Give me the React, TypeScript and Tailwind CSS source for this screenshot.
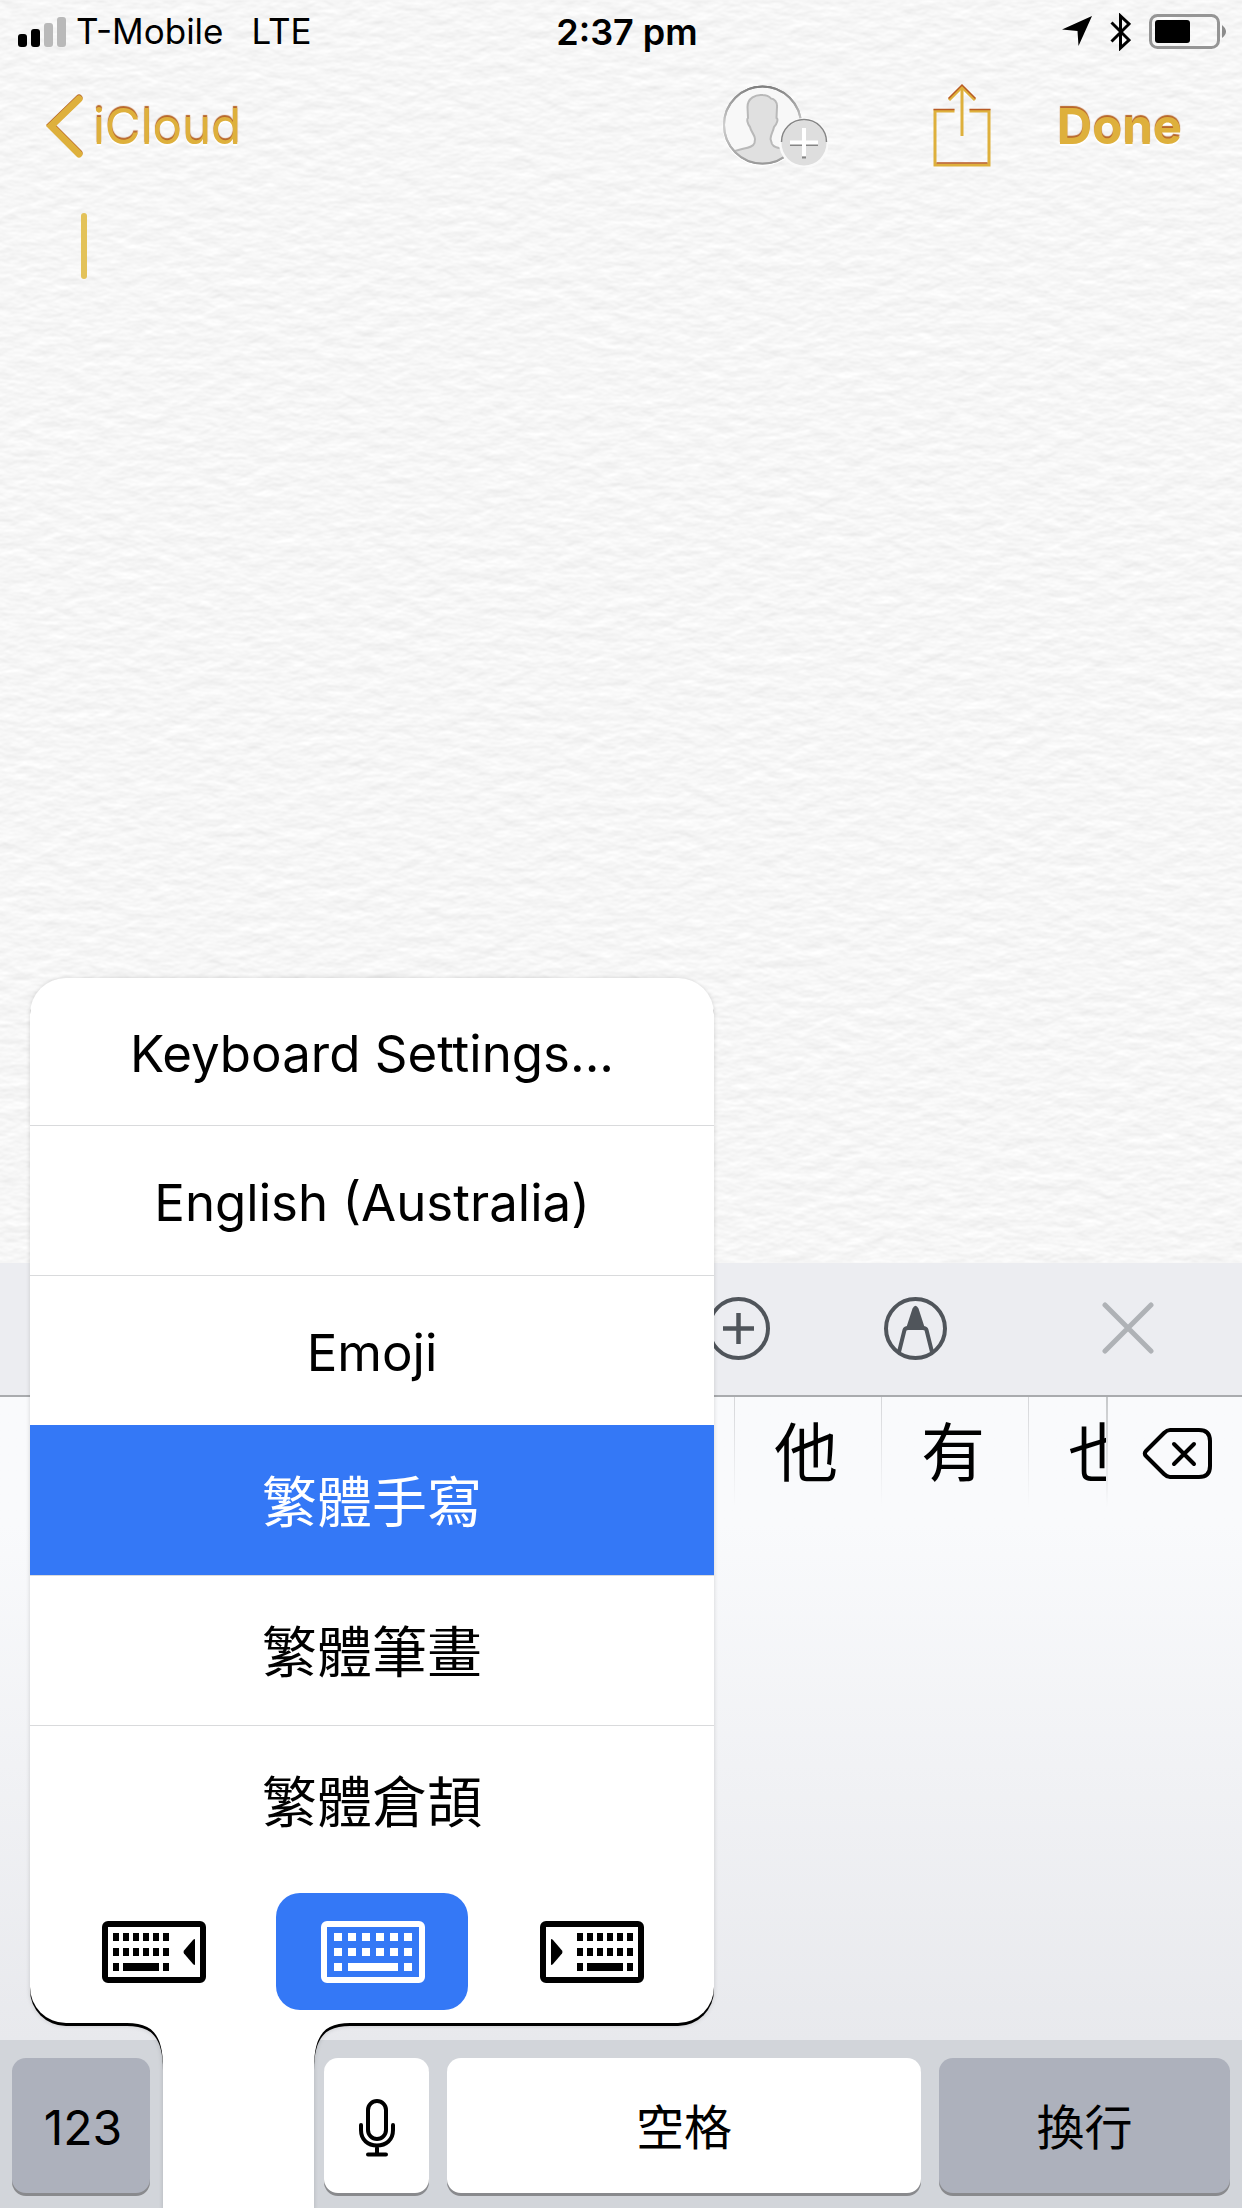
import type { ReactNode } from "react";

const SANS = "font-['Inter','Noto_Sans_CJK_TC',sans-serif]";
const ENGRAVED = "text-[#deb03c] [text-shadow:0_-2px_1px_#b8662a,0_2px_1px_#ffffff]";

function PaperTexture() {
  return (
    <svg className="pointer-events-none absolute inset-0 h-full w-full" aria-hidden="true">
      <filter id="paper" x="0" y="0" width="100%" height="100%" colorInterpolationFilters="sRGB">
        <feTurbulence type="fractalNoise" baseFrequency="0.045 0.085" numOctaves={3} seed={7} result="noise" />
        <feDiffuseLighting in="noise" surfaceScale={0.28} diffuseConstant={1.115} lightingColor="#ffffff">
          <feDistantLight azimuth={270} elevation={60} />
        </feDiffuseLighting>
      </filter>
      <rect width="100%" height="100%" filter="url(#paper)" />
    </svg>
  );
}

function StatusBar() {
  return (
    <div className="relative grid h-[60px] grid-cols-[1fr_auto_1fr] items-center px-[15px] pt-[3px] text-[35px] leading-none text-black">
      <div className="flex items-center gap-[10px] pl-[3px]">
        <svg width="48" height="30" viewBox="0 0 48 30" aria-label="Signal strength">
          <rect x="0" y="17" width="9" height="13" rx="3" />
          <rect x="13" y="12" width="9" height="18" rx="3" />
          <rect x="26" y="6" width="9" height="24" rx="3" fill="#b9b9b9" />
          <rect x="39" y="0" width="9" height="30" rx="3" fill="#b9b9b9" />
        </svg>
        <span>T-Mobile</span>
        <span className="pl-[18px]">LTE</span>
      </div>
      <div className="pl-3 text-[36px] font-semibold">2:37 pm</div>
      <div className="flex items-center justify-end gap-[18px]">
        <svg width="30" height="31" viewBox="0 0 30 31" aria-label="Location in use">
          <path d="M30 0 L16.500 30 L15.500 15 L0 13.500 Z" />
        </svg>
        <svg width="21" height="38" viewBox="0 0 21 38" fill="none" stroke="#000" strokeWidth="3" aria-label="Bluetooth">
          <path d="M1.500 9.500 L19 27 L10.500 35 V3 L19 11 L1.500 28.500" />
        </svg>
        <svg width="78" height="35" viewBox="0 0 78 35" aria-label="Battery">
          <rect x="1.500" y="1.500" width="68" height="32" rx="7" fill="none" stroke="#959595" strokeWidth="3" />
          <rect x="6" y="6" width="35" height="23" rx="3" />
          <path d="M73 11 Q81 17.500 73 24 Z" fill="#8b8b8b" />
        </svg>
      </div>
    </div>
  );
}

function NavBar() {
  return (
    <header className="relative flex h-[132px] items-center justify-between pr-[60px] pl-[46px]">
      <a href="#icloud" className={`flex items-center gap-[9px] text-[49px] leading-none ${ENGRAVED}`}>
        <svg width="38" height="64" viewBox="0 0 38 64" fill="none" strokeLinecap="round" strokeLinejoin="miter" aria-hidden="true">
          <path d="M33 4 L5 31 L33 59" stroke="#b8662a" strokeWidth="7" />
          <path d="M33 5 L5 32 L33 60" stroke="#deb03c" strokeWidth="7" />
        </svg>
        iCloud
      </a>
      <div className="flex items-center">
        <button type="button" aria-label="Add people" className="mr-[105px] pb-[3px]">
          <svg width="106" height="84" viewBox="0 0 106 84">
            <defs>
              <clipPath id="face">
                <circle cx="40.500" cy="42" r="38.500" />
              </clipPath>
              <linearGradient id="rim" x1="0" y1="0" x2="0" y2="1">
                <stop offset="0" stopColor="#808080" />
                <stop offset="0.500" stopColor="#cfcfcf" />
                <stop offset="1" stopColor="#9a9a9a" />
              </linearGradient>
            </defs>
            <circle cx="40.500" cy="43" r="38.500" fill="none" stroke="#fff" strokeWidth="3" />
            <circle cx="40.500" cy="42" r="38.500" fill="#f8f8f8" stroke="url(#rim)" strokeWidth="2" />
            <g clipPath="url(#face)">
              <path
                d="M40 12 C34 11.500 25.500 15 25.500 24 L26 35 C24.500 36 25.500 41 28 44 C29 49 33 52 33 56 L32.500 60 C31 65 22 65 13 68 L10 70 V86 H74 V68 C62 65 52 66 50 61 L48.500 56 C48.500 52 51 49 52 44 C55 41 56.500 36 54.500 35 L55 24 C55.500 19 52 15.500 49 15.500 C47 13 43 12 40 12 Z"
                fill="#e0e0e0"
                stroke="#b9b9b9"
                strokeWidth="2"
              />
            </g>
            <circle cx="40.500" cy="42" r="38.500" fill="none" stroke="url(#rim)" strokeWidth="2" />
            <circle cx="82" cy="60" r="25" fill="#fafafa" />
            <circle cx="82" cy="60" r="22.500" fill="#dedede" />
            <path d="M59.500 59 A22.500 22.500 0 0 1 104.500 59" fill="none" stroke="#858585" strokeWidth="1.500" />
            <path d="M68 62 H96 M80 74.500 H84" stroke="#858585" strokeWidth="2" />
            <path d="M68 59.500 H96 M82 45 V73" stroke="#fff" strokeWidth="4" />
          </svg>
        </button>
        <button type="button" aria-label="Share" className="mr-[66px] pb-[3px]">
          <svg width="58" height="84" viewBox="0 0 58 84" fill="none" stroke="#deb03c" strokeWidth="3">
            <path d="M21.500 28 H2 V82 H56 V28 H36.500" />
            <path d="M29 4 V53" />
            <path d="M16 17 L29 4 L42 17" />
            <path d="M0.500 26.500 H21.500 M36.500 26.500 H57.500 M3.500 80 H54.500" stroke="#b85a24" strokeWidth="1.500" />
            <path d="M15.500 15.500 L29 2 L42.500 15.500" stroke="#b85a24" strokeWidth="1.500" />
          </svg>
        </button>
        <button type="button" className={`text-[49px] font-bold leading-none ${ENGRAVED}`}>
          Done
        </button>
      </div>
    </header>
  );
}

function Toolbar() {
  return (
    <div className="flex h-[132px] items-center justify-end bg-[#ecedf1] pr-[88px] pb-[2px]" role="toolbar" aria-label="Note tools">
      <button type="button" aria-label="Add attachment" className="mr-[114px]">
        <svg width="63" height="63" viewBox="0 0 63 63" fill="none" stroke="#50555b" strokeWidth="4">
          <circle cx="31.500" cy="31.500" r="29.500" />
          <path d="M16 31.500 H47 M31.500 16 V47" strokeWidth="4.500" />
        </svg>
      </button>
      <button type="button" aria-label="Markup" className="mr-[155px]">
        <svg width="63" height="63" viewBox="0 0 63 63" fill="none" stroke="#50555b" strokeWidth="4">
          <circle cx="31.500" cy="31.500" r="29.500" />
          <path d="M15 55 L20.500 33 Q21 31 24 31 H39 Q42 31 42.500 33 L48 55" />
          <path d="M28.500 11.500 Q31.500 6 34.500 11.500 L40.500 30 L43 33 H20 L22.500 30 Z" fill="#50555b" stroke="none" />
        </svg>
      </button>
      <button type="button" aria-label="Close toolbar">
        <svg width="52" height="52" viewBox="0 0 52 52" stroke="#afb2b6" strokeWidth="5" strokeLinecap="round">
          <path d="M3 3 L49 49 M49 3 L3 49" />
        </svg>
      </button>
    </div>
  );
}

function Candidates() {
  return (
    <div className="flex h-[112px] border-t-2 border-[#a9abae]">
      <div className="flex min-w-0 flex-1 overflow-hidden pl-[734px]">
        {["他", "有", "也"].map((c) => (
          <div key={c} className="flex w-[147px] shrink-0">
            <span className="w-px bg-linear-to-b from-[#d5d6d9] to-transparent" />
            <button type="button" className="flex-1 pt-[2px] pr-1 text-[64px] leading-[108px] text-black">
              {c}
            </button>
          </div>
        ))}
      </div>
      <span className="w-[2px] bg-linear-to-b from-[#c6c8ca] to-transparent" />
      <button type="button" aria-label="Delete" className="flex w-[134px] items-center justify-center pt-[3px] pl-[3px]">
        <svg width="70" height="51" viewBox="0 0 70 51" fill="none" stroke="#000" strokeWidth="4" strokeLinecap="round" strokeLinejoin="round">
          <path d="M28 2 H57 Q68 2 68 13 V38 Q68 49 57 49 H28 Q25 49 22 46 L4 28 Q1.500 25.500 4 23 L22 5 Q25 2 28 2 Z" />
          <path d="M32 16 L52 36 M52 16 L32 36" />
        </svg>
      </button>
    </div>
  );
}

function Key({ label, className, children }: { label?: string; className: string; children: ReactNode }) {
  return (
    <button
      type="button"
      aria-label={label}
      className={`flex h-[135px] items-center justify-center rounded-[14px] pt-1 text-[48px] leading-none text-black shadow-[0_3px_0_#898a8d] ${className}`}
    >
      {children}
    </button>
  );
}

function BottomKeys() {
  return (
    <div className="flex h-[168px] gap-[18px] bg-[#d2d5da] px-3 pt-[18px]">
      <Key className="w-[138px] bg-[#adb1bc] pl-1">123</Key>
      <div className="w-[138px]" />
      <Key label="Dictation" className="w-[105px] bg-white">
        <svg width="36" height="58" viewBox="0 0 36 58" fill="none" stroke="#000" strokeWidth="4" strokeLinecap="round">
          <rect x="9" y="2" width="18" height="38" rx="9" />
          <path d="M2 26 V31 C2 41 9 46.500 18 46.500 C27 46.500 34 41 34 31 V26 M18 47 V55 M9 55.500 H27" />
        </svg>
      </Key>
      <Key className="flex-1 bg-white">空格</Key>
      <Key className="w-[291px] bg-[#adb1bc]">換行</Key>
    </div>
  );
}

type Dock = "left" | "full" | "right";

function KeyboardGlyph({ dock }: { dock: Dock }) {
  const full = dock === "full";
  const pitch = full ? 14 : 10;
  const key = full ? 8 : 6;
  const start = dock === "left" ? 11 : full ? 13 : 37;
  const columns = [0, 1, 2, 3, 4, 5];
  return (
    <svg width="104" height="62" viewBox="0 0 104 62" fill="currentColor" aria-hidden="true">
      <rect x="3" y="3" width="98" height="56" rx="3" fill="none" stroke="currentColor" strokeWidth="6" />
      {[12, 27].map((y) => columns.map((i) => <rect key={`${y}-${i}`} x={start + i * pitch} y={y} width={key} height="8" />))}
      <rect x={start} y="42" width={key} height="8" />
      <rect x={start + pitch} y="42" width={pitch * 3 + key} height="8" />
      <rect x={start + pitch * 5} y="42" width={key} height="8" />
      {dock === "left" && <path d="M93 19 V43 Q93 45 91 43 L82 32.500 Q81 31 82 29.500 L91 19 Q93 17 93 19 Z" />}
      {dock === "right" && <path d="M11 19 V43 Q11 45 13 43 L22 32.500 Q23 31 22 29.500 L13 19 Q11 17 11 19 Z" />}
    </svg>
  );
}

const KEYBOARDS = [
  { name: "Keyboard Settings...", style: "h-[147px] pt-1 text-[51px]" },
  { name: "English (Australia)", style: "h-[150px] border-t border-[#d9dadc] pt-1 text-[51px]" },
  { name: "Emoji", style: "h-[150px] border-t border-[#d9dadc] pt-1 text-[51px]" },
  { name: "繁體手寫", style: "h-[150px] bg-[#3478f6] pt-1 text-[55px] text-white" },
  { name: "繁體筆畫", style: "h-[150px] border-t border-[#d9dadc] pt-1 text-[55px]" },
  { name: "繁體倉頡", style: "h-[150px] border-t border-[#d9dadc] pt-1 text-[55px]" },
];

const DOCKS: { dock: Dock; label: string; style: string }[] = [
  { dock: "left", label: "Dock keyboard left", style: "text-black" },
  { dock: "full", label: "Full width keyboard", style: "bg-[#3478f6] text-white" },
  { dock: "right", label: "Dock keyboard right", style: "text-black" },
];

function KeyboardMenu() {
  return (
    <div className="absolute bottom-0 left-[30px] w-[684px] filter-[drop-shadow(0_3px_0_#000)_drop-shadow(0_0_2px_rgba(0,0,0,0.15))]">
      <div className="overflow-hidden rounded-[36px] bg-white">
        {KEYBOARDS.map((k) => (
          <button key={k.name} type="button" className={`flex w-full items-center justify-center leading-none ${k.style}`}>
            {k.name}
          </button>
        ))}
        <div className="flex h-[148px] justify-center gap-[27px] pt-[18px]">
          {DOCKS.map((d) => (
            <button
              key={d.dock}
              type="button"
              aria-label={d.label}
              className={`flex h-[117px] w-[192px] items-center justify-center rounded-[24px] pl-px ${d.style}`}
            >
              <KeyboardGlyph dock={d.dock} />
            </button>
          ))}
        </div>
      </div>
      <svg className="-mt-px ml-[97px] block" width="223" height="186" viewBox="0 0 223 186" fill="#fff" aria-hidden="true">
        <path d="M0 0 H223 V1 C199 1 187 11 187 46 V186 H36 V46 C36 11 24 1 0 1 Z" />
      </svg>
    </div>
  );
}

export default function App() {
  return (
    <div className={`flex min-h-screen flex-col overflow-hidden bg-[#f6f6f6] ${SANS}`}>
      <div className="relative flex flex-1 flex-col">
        <PaperTexture />
        <StatusBar />
        <NavBar />
        <main className="relative flex flex-1 items-start pt-[21px] pr-[60px] pl-[81px]">
          <span className="h-[66px] w-[6px] rounded-full bg-[#e3c259]" />
          <textarea aria-label="Note" rows={1} className="h-full flex-1 resize-none bg-transparent text-[51px] caret-transparent outline-none" />
        </main>
      </div>
      <div className="relative">
        <Toolbar />
        <div className="h-[645px] bg-linear-to-b from-[#f9fafc] from-20% to-[#e8e9ed]">
          <Candidates />
        </div>
        <BottomKeys />
        <KeyboardMenu />
      </div>
    </div>
  );
}
